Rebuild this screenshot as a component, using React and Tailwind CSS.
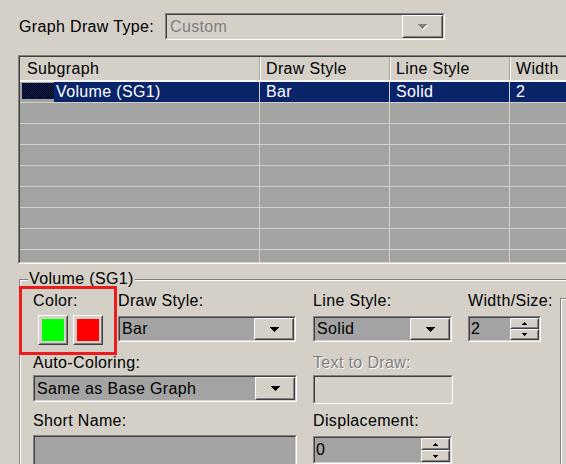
import React from "react";

const Sunken = ({ className = "", innerClass = "", children }) => (
  <div className={"border border-t-[#808080] border-l-[#808080] border-b-white border-r-white " + className}>
    <div className={"h-full border border-t-[#404040] border-l-[#404040] border-b-[#d4d0c8] border-r-[#d4d0c8] " + innerClass}>
      {children}
    </div>
  </div>
);

const Raised = ({ className = "", children }) => (
  <div className={"border border-t-white border-l-white border-b-[#404040] border-r-[#404040] " + className}>
    <div className="w-full h-full border border-t-[#d4d0c8] border-l-[#d4d0c8] border-b-[#808080] border-r-[#808080] bg-[#d4d0c8] flex items-center justify-center">
      {children}
    </div>
  </div>
);

const Arrow = ({ fill = "#000" }) => (
  <svg width="9" height="5" shapeRendering="crispEdges" fill={fill}>
    <rect x="0" y="0" width="9" height="1" />
    <rect x="1" y="1" width="7" height="1" />
    <rect x="2" y="2" width="5" height="1" />
    <rect x="3" y="3" width="3" height="1" />
    <rect x="4" y="4" width="1" height="1" />
  </svg>
);

const SmallArrow = ({ up }) => (
  <svg width="5" height="3" shapeRendering="crispEdges" fill="#000">
    {up ? (
      <>
        <rect x="2" y="0" width="1" height="1" />
        <rect x="1" y="1" width="3" height="1" />
        <rect x="0" y="2" width="5" height="1" />
      </>
    ) : (
      <>
        <rect x="0" y="0" width="5" height="1" />
        <rect x="1" y="1" width="3" height="1" />
        <rect x="2" y="2" width="1" height="1" />
      </>
    )}
  </svg>
);

const Combo = ({ className, text }) => (
  <Sunken className={className}>
    <div className="flex h-full bg-[#a3a3a3]">
      <div className="flex-1 pl-[2px] flex items-center whitespace-nowrap">{text}</div>
      <Raised className="w-[40px] h-full">
        <Arrow />
      </Raised>
    </div>
  </Sunken>
);

const Spinner = ({ className, text }) => (
  <Sunken className={className}>
    <div className="flex h-full bg-[#a3a3a3]">
      <div className="flex-1 pl-[1px] flex items-center">{text}</div>
      <div className="w-[29px] flex flex-col">
        <Raised className="flex-1">
          <SmallArrow up />
        </Raised>
        <Raised className="flex-1">
          <SmallArrow />
        </Raised>
      </div>
    </div>
  </Sunken>
);

const ColorBtn = ({ color }) => (
  <Raised className="w-[30px] h-[30px]">
    <div className={"w-[22px] h-[22px] " + color}></div>
  </Raised>
);

const rows = [1, 2, 3, 4, 5, 6, 7, 8];

export default function App() {
  return (
    <div className="w-[566px] h-[464px] overflow-hidden bg-[#d4d0c8] text-[16px] leading-[18px] tracking-[0.35px] text-black font-['Liberation_Sans',Arial,sans-serif]">
      {/* Graph draw type */}
      <div className="flex items-center pt-[13px] pl-[19px]">
        <span className="w-[146px] whitespace-nowrap">Graph Draw Type:</span>
        <Sunken className="w-[280px] h-[27px]">
          <div className="flex h-full bg-[#d4d0c8]">
            <div className="flex-1 pl-[3px] flex items-center text-[#808080]">Custom</div>
            <Raised className="w-[41px] h-full">
              <svg width="10" height="6" shapeRendering="crispEdges">
                <g fill="#fff" transform="translate(1,1)">
                  <rect x="0" y="0" width="9" height="1" />
                  <rect x="1" y="1" width="7" height="1" />
                  <rect x="2" y="2" width="5" height="1" />
                  <rect x="3" y="3" width="3" height="1" />
                  <rect x="4" y="4" width="1" height="1" />
                </g>
                <g fill="#808080">
                  <rect x="0" y="0" width="9" height="1" />
                  <rect x="1" y="1" width="7" height="1" />
                  <rect x="2" y="2" width="5" height="1" />
                  <rect x="3" y="3" width="3" height="1" />
                  <rect x="4" y="4" width="1" height="1" />
                </g>
              </svg>
            </Raised>
          </div>
        </Sunken>
      </div>

      {/* Table */}
      <Sunken className="mt-[15px] ml-[18px] w-[600px] h-[209px]" innerClass="bg-[#a3a3a3] overflow-hidden">
        <div className="flex h-[25px] bg-[#d4d0c8] border-b-2 border-b-[#f4f4f2]">
          <div className="w-[240px] shrink-0 pl-[7px] flex items-center border-r border-r-[#a8a49c]">Subgraph</div>
          <div className="w-[130px] shrink-0 pl-[6px] flex items-center border-r border-r-[#a8a49c] shadow-[inset_1px_0_0_#fff]">Draw Style</div>
          <div className="w-[120px] shrink-0 pl-[6px] flex items-center border-r border-r-[#a8a49c] shadow-[inset_1px_0_0_#fff]">Line Style</div>
          <div className="w-[100px] shrink-0 pl-[6px] flex items-center shadow-[inset_1px_0_0_#fff]">Width</div>
        </div>
        <div className="flex h-[21px] border-b border-b-[#d4d0c8]">
          <div className="w-[240px] shrink-0 flex border-r border-r-[#d4d0c8]">
            <div className="ml-[2px] mt-[1px] w-[32px] h-[16px] bg-[repeating-conic-gradient(#000_0_25%,#0a246a_0_50%)] bg-[length:2px_2px]"></div>
            <div className="flex-1 bg-[#0a246a] text-white pl-[2px] flex items-center whitespace-nowrap">Volume (SG1)</div>
          </div>
          <div className="w-[130px] shrink-0 bg-[#0a246a] text-white pl-[6px] flex items-center border-r border-r-[#d4d0c8]">Bar</div>
          <div className="w-[120px] shrink-0 bg-[#0a246a] text-white pl-[6px] flex items-center border-r border-r-[#d4d0c8]">Solid</div>
          <div className="w-[100px] shrink-0 bg-[#0a246a] text-white pl-[6px] flex items-center">2</div>
        </div>
        {rows.map((r) => (
          <div key={r} className="flex h-[21px] border-b border-b-[#d4d0c8]">
            <div className="w-[240px] shrink-0 border-r border-r-[#d4d0c8]"></div>
            <div className="w-[130px] shrink-0 border-r border-r-[#d4d0c8]"></div>
            <div className="w-[120px] shrink-0 border-r border-r-[#d4d0c8]"></div>
            <div className="w-[100px] shrink-0"></div>
          </div>
        ))}
      </Sunken>

      {/* Group box */}
      <fieldset className="relative mt-[6px] ml-[19px] w-[620px] h-[260px] border border-[#808080] shadow-[inset_1px_1px_0_#fff] p-0 m-0">
        <legend className="ml-[8px] px-[1px] bg-[#d4d0c8] whitespace-nowrap">Volume (SG1)</legend>
        <div className="flex pl-[13px] pt-[4px]">
          {/* Left column */}
          <div className="w-[264px] shrink-0">
            <div className="flex h-[50px]">
              <div className="w-[85px] shrink-0">
                <div>Color:</div>
                <div className="flex gap-[5px] ml-[5px] mt-[5px]">
                  <ColorBtn color="bg-[#00ff00]" />
                  <ColorBtn color="bg-[#ff0000]" />
                </div>
              </div>
              <div className="w-[179px] shrink-0">
                <div>Draw Style:</div>
                <Combo className="mt-[6px] w-[178px] h-[26px]" text="Bar" />
              </div>
            </div>
            <div className="mt-[12px]">Auto-Coloring:</div>
            <Combo className="mt-[3px] w-[264px] h-[27px]" text="Same as Base Graph" />
            <div className="mt-[10px]">Short Name:</div>
            <Sunken className="mt-[5px] w-[264px] h-[40px]" innerClass="bg-[#a3a3a3]" />
          </div>
          {/* Middle column */}
          <div className="ml-[16px] w-[140px] shrink-0">
            <div className="h-[50px]">
              <div>Line Style:</div>
              <Combo className="mt-[6px] w-[139px] h-[26px]" text="Solid" />
            </div>
            <div className="mt-[12px] text-[#808080] [text-shadow:1px_1px_0_#fff]">Text to Draw:</div>
            <Sunken className="mt-[3px] w-[140px] h-[29px]" innerClass="bg-[#d4d0c8]" />
            <div className="mt-[8px]">Displacement:</div>
            <Spinner className="mt-[6px] w-[139px] h-[28px]" text="0" />
          </div>
          {/* Right column */}
          <div className="ml-[15px] w-[73px] shrink-0">
            <div className="whitespace-nowrap">Width/Size:</div>
            <Spinner className="mt-[6px] w-[73px] h-[26px]" text="2" />
          </div>
          <div className="ml-[19px] mt-[6px] w-[60px] h-[200px] border-t border-l border-[#808080] shadow-[inset_1px_1px_0_#fff]"></div>
        </div>
        <div className="absolute left-[-1px] top-[-2px] w-[98px] h-[69px] border-[3px] border-[#ec1c1c]"></div>
      </fieldset>
    </div>
  );
}
